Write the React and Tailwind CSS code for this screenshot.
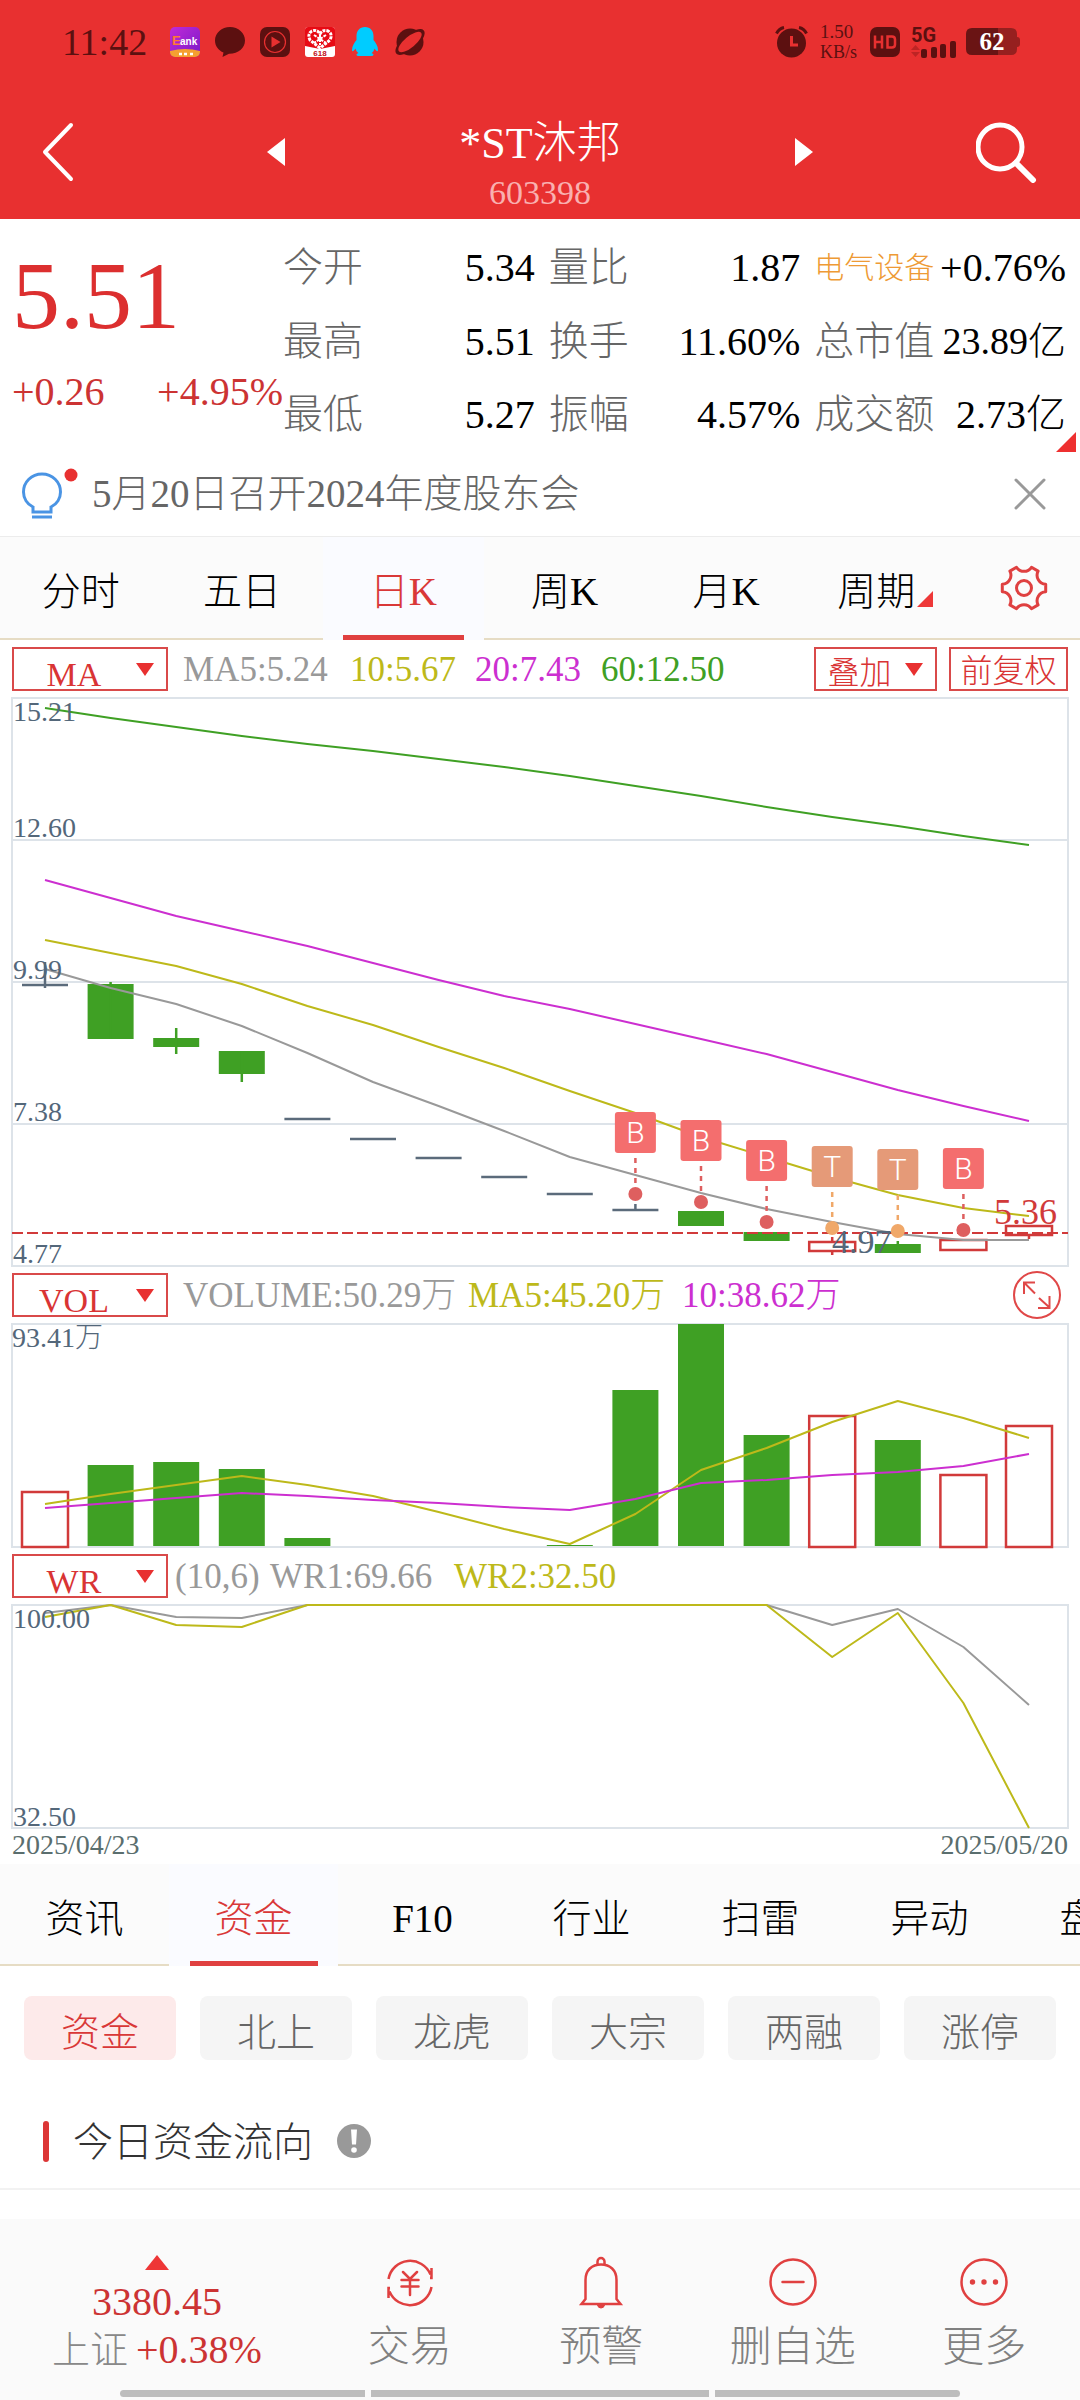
import React from "react";

const SERIF = "font-['Liberation_Serif','Noto_Sans_CJK_SC',serif]";

/* ---------- status bar ---------- */

function StatusBar() {
  return (
    <div className="flex h-[84px] items-center justify-between pl-[62px] pr-[60px] text-[#5c1010]">
      <div className="flex items-center gap-[15px]">
        <span className="mr-2 text-[38px] leading-none">11:42</span>
        <svg className="size-[30px]" viewBox="0 0 30 30" aria-hidden="true">
          <defs>
            <linearGradient id="bankTop" x1="0" y1="0" x2="1" y2="1">
              <stop offset="0" stopColor="#c02ad8" />
              <stop offset="1" stopColor="#7a18c8" />
            </linearGradient>
            <clipPath id="bankClip">
              <rect width="30" height="30" rx="5" />
            </clipPath>
          </defs>
          <g clipPath="url(#bankClip)">
            <rect width="30" height="30" fill="url(#bankTop)" />
            <path d="M0 24Q15 20 30 24V30H0Z" fill="#f5a030" />
            <text x="2" y="18" fontSize="13" fontWeight="700" fill="#ff7a30" fontFamily="Liberation Sans">E</text>
            <text x="10" y="18" fontSize="10" fontWeight="700" fill="#fff" fontFamily="Liberation Sans">ank</text>
            <path d="M9 27h3M14 27h3M20 27h3" stroke="#fff" strokeWidth="2.500" />
          </g>
        </svg>
        <svg className="size-[30px]" viewBox="0 0 30 30" fill="currentColor" aria-hidden="true">
          <path d="M15 0C6.700 0 0 6 0 13.500 0 19 3.500 23.500 8.500 25.500L7.500 30 14 26.800C23 27 30 21 30 13.500 30 6 23.300 0 15 0Z" />
        </svg>
        <svg className="size-[30px]" viewBox="0 0 30 30" aria-hidden="true">
          <rect width="30" height="30" rx="7" fill="currentColor" />
          <circle cx="15" cy="15" r="10.500" fill="none" stroke="#e83030" strokeWidth="1.200" />
          <path d="M11.500 9.500 20.500 15 11.500 20.500Z" fill="#e83030" />
        </svg>
        <svg className="size-[30px]" viewBox="0 0 30 30" aria-hidden="true">
          <rect width="30" height="30" rx="3" fill="#fff" />
          <path d="M3 0H27Q30 0 30 3V19L15 22 0 19V3Q0 0 3 0Z" fill="#e80a14" />
          <path d="M15 21 5 13Q2 7 7 4 12 2 15 7 18 2 23 4 28 7 25 13Z" fill="none" stroke="#fff" strokeWidth="3" strokeDasharray="3 1" />
          <path d="M9 8 21 16M21 8 9 16M15 8V18" stroke="#fff" strokeWidth="2" strokeDasharray="3 1" />
          <text x="15" y="29" fontSize="8" fontWeight="700" textAnchor="middle" fill="#c01018" fontFamily="Liberation Sans">618</text>
        </svg>
        <svg className="size-[30px]" viewBox="0 0 30 30" fill="#0cf" aria-hidden="true">
          <path d="M15 0C9.500 0 6.500 4 6.500 9V13C4.500 15.500 2 19 2 23 2 25 3.500 24.500 5.500 21.500 6 23.500 7 25 8.500 26 5.500 27 6 29 9 29H21C24 29 24.500 27 21.500 26 23 25 24 23.500 24.500 21.500 26.500 24.500 28 25 28 23 28 19 25.500 15.500 23.500 13V9C23.500 4 20.500 0 15 0Z" />
        </svg>
        <svg className="size-[30px] overflow-visible" viewBox="0 0 30 30" aria-hidden="true">
          <circle cx="15" cy="15" r="13.500" fill="currentColor" />
          <ellipse cx="15" cy="15" rx="18" ry="7.500" fill="currentColor" transform="rotate(-40 15 15)" />
          <ellipse cx="15" cy="15" rx="14.500" ry="5.500" fill="#e83030" transform="rotate(-40 15 15)" />
        </svg>
      </div>
      <div className="flex items-center">
        <svg className="h-8 w-[33px]" viewBox="0 0 33 32" aria-hidden="true">
          <circle cx="16.500" cy="17" r="14.500" fill="currentColor" />
          <path d="M1.500 7.500Q4 2.500 9 1.500M31.500 7.500Q29 2.500 24 1.500" fill="none" stroke="currentColor" strokeWidth="3" />
          <path d="M16.500 10V19H23" fill="none" stroke="#e83030" strokeWidth="3" />
        </svg>
        <div className="ml-3 w-[38px] text-[19px] leading-5">
          <div>1.50</div>
          <div className="text-[18px]">KB/s</div>
        </div>
        <svg className="ml-3 size-[30px]" viewBox="0 0 30 30" aria-hidden="true">
          <rect width="30" height="30" rx="7" fill="currentColor" />
          <path d="M5 8.500V21.500M12 8.500V21.500M5 15H12M17.500 9.500H22Q25 9.500 25 12.500V17.500Q25 20.500 22 20.500H17.500Z" fill="none" stroke="#e83030" strokeWidth="2.500" />
        </svg>
        <svg className="ml-[11px] h-[31px] w-[46px] overflow-visible" viewBox="0 0 46 31" aria-hidden="true">
          <text x="0" y="15" fontSize="20" fontWeight="700" fill="currentColor" fontFamily="Roboto">5G</text>
          <path d="M0 23 4.500 18 9 23ZM0 25 4.500 30 9 25Z" fill="#bd2424" />
          <g fill="currentColor">
            <rect x="10" y="22" width="6" height="9" rx="2" />
            <rect x="20" y="20" width="6" height="11" rx="2" />
            <rect x="29" y="17" width="6" height="14" rx="2" />
            <rect x="39" y="14" width="6" height="17" rx="2" />
          </g>
        </svg>
        <svg className="ml-[9px] h-7 w-[54px]" viewBox="0 0 54 28" aria-hidden="true">
          <path d="M32 0H45Q51 0 51 6V9Q54 9 54 12V16Q54 19 51 19V21Q51 27 45 27H32Z" fill="#96201f" />
          <path d="M32 0H6Q0 0 0 6V21Q0 27 6 27H32Z" fill="#6a1414" />
          <text x="26" y="22" fontSize="25" fontWeight="700" textAnchor="middle" fill="#fff" fontFamily="Liberation Serif">62</text>
        </svg>
      </div>
    </div>
  );
}

function TitleBar() {
  return (
    <div className="grid h-[135px] grid-cols-[1fr_minmax(0,546px)_1fr] items-center text-white">
      <button aria-label="返回" className="ml-[41px] justify-self-start">
        <svg className="h-[60px] w-[34px]" viewBox="0 0 34 60" fill="none" stroke="currentColor" strokeWidth="4" strokeLinecap="round" strokeLinejoin="round">
          <path d="M30 3 4 30 30 57" />
        </svg>
      </button>
      <div className="flex items-center justify-between">
        <button aria-label="上一只">
          <svg className="h-7 w-[18px]" viewBox="0 0 18 28" fill="currentColor">
            <path d="M18 0V28L0 14Z" />
          </svg>
        </button>
        <div className="pt-[30px] text-center">
          <h1 className="text-[44px] font-light leading-[52px]">*ST沐邦</h1>
          <p className="text-[34px] leading-[46px] text-[#f9b0b0]">603398</p>
        </div>
        <button aria-label="下一只">
          <svg className="h-7 w-[18px]" viewBox="0 0 18 28" fill="currentColor">
            <path d="M0 0V28L18 14Z" />
          </svg>
        </button>
      </div>
      <button aria-label="搜索" className="mr-[43px] justify-self-end">
        <svg className="h-[62px] w-[61px]" viewBox="0 0 61 62" fill="none" stroke="currentColor" strokeLinecap="round">
          <circle cx="24" cy="26" r="22" strokeWidth="5" />
          <path d="M40 42 57 59" strokeWidth="6" />
        </svg>
      </button>
    </div>
  );
}

/* ---------- quote ---------- */

const STATS = [
  ["今开", "5.34"],
  ["量比", "1.87"],
  ["电气设备", "+0.76%"],
  ["最高", "5.51"],
  ["换手", "11.60%"],
  ["总市值", "23.89亿"],
  ["最低", "5.27"],
  ["振幅", "4.57%"],
  ["成交额", "2.73亿"],
];

function Quote() {
  return (
    <section className="relative flex h-[233px] pl-3 pr-[14px]">
      <div className="w-[271px] shrink-0 whitespace-nowrap pt-[29px] text-[#dc2f2f]">
        <div className="text-[96px] leading-[96px]">5.51</div>
        <div className="mt-7 flex text-[40px] leading-10 text-[#cc3333]">
          <span className="w-[147px]">+0.26</span>
          <span>+4.95%</span>
        </div>
      </div>
      <dl className="grid flex-1 grid-cols-3 gap-x-[14px] pt-3">
        {STATS.map(([label, value]) => (
          <div key={label} className="flex h-[73px] items-center justify-between whitespace-nowrap text-[40px] leading-[73px]">
            <dt className={label === "电气设备" ? "text-[30px] text-[#ee9a35]" : "text-[#666]"}>{label}</dt>
            <dd className={value === "23.89亿" ? "text-[38px] text-black" : "text-black"}>{value}</dd>
          </div>
        ))}
      </dl>
      <svg className="absolute bottom-0 right-1 size-5" viewBox="0 0 20 20" aria-hidden="true">
        <path d="M20 0V20H0Z" fill="#ee3030" />
      </svg>
    </section>
  );
}

function Notice() {
  return (
    <section className="flex h-[84px] items-center pl-[22px] pr-[34px]">
      <svg className="h-[52px] w-[56px]" viewBox="0 0 56 52" fill="none" aria-hidden="true">
        <path d="M11 44V39C5 36 1.500 30 1.500 24 1.500 14 9.500 6 20 6S38.500 14 38.500 24C38.500 30 35 36 29 39V44Z" stroke="#4a94e4" strokeWidth="3" />
        <path d="M10 49H30" stroke="#4a94e4" strokeWidth="3" />
        <circle cx="49" cy="7" r="6.500" fill="#e83030" />
      </svg>
      <p className="ml-3.5 flex-1 text-[39px] leading-[52px] text-[#666]">5月20日召开2024年度股东会</p>
      <button aria-label="关闭">
        <svg className="size-8" viewBox="0 0 32 32" fill="none" stroke="#999" strokeWidth="3" strokeLinecap="round">
          <path d="M2 2 30 30M30 2 2 30" />
        </svg>
      </button>
    </section>
  );
}

/* ---------- tabs ---------- */

function Tab({ label, active, className = "", barClass = "", corner }) {
  return (
    <button
      role="tab"
      aria-selected={!!active}
      className={`flex flex-col items-center text-[39px] ${className} ${
        active ? "bg-[#fafbff] text-[#d93838]" : "border-b-2 border-[#e6dcc4] text-black"
      }`}
    >
      <span className={`flex flex-1 items-center whitespace-nowrap ${active ? "pt-[13px]" : "pt-2.5"} ${corner ? "pr-1" : ""}`}>
        {label}
        {corner && (
          <svg className="ml-0.5 mt-3 size-4" viewBox="0 0 16 16" aria-hidden="true">
            <path d="M16 0V16H0Z" fill="#ee3838" />
          </svg>
        )}
      </span>
      {active && <span className={`h-[5px] bg-[#e04040] ${barClass}`} />}
    </button>
  );
}

function gearPath() {
  const pt = (deg) => {
    const a = (deg * Math.PI) / 180;
    return `${(24 + 22 * Math.cos(a)).toFixed(1)} ${(24 + 22 * Math.sin(a)).toFixed(1)}`;
  };
  let d = `M${pt(-10)}`;
  for (let a = 0; a < 360; a += 60) d += `L${pt(a + 10)}A9 9 0 0 0 ${pt(a + 50)}`;
  return d + "Z";
}

function PeriodTabs() {
  const tabs = ["分时", "五日", "日K", "周K", "月K", "周期"];
  return (
    <div role="tablist" className="flex h-[104px] border-t border-[#ececec] bg-[#fbfbfb]">
      {tabs.map((t) => (
        <Tab key={t} label={t} active={t === "日K"} corner={t === "周期"} className="flex-1" barClass="w-3/4" />
      ))}
      <button aria-label="设置" className="flex w-28 shrink-0 items-center justify-center border-b-2 border-[#e6dcc4]">
        <svg className="size-12" viewBox="0 0 48 48" fill="none" stroke="#df4040" strokeWidth="3" strokeLinejoin="round">
          <path d={gearPath()} />
          <circle cx="24" cy="24" r="7.500" />
        </svg>
      </button>
    </div>
  );
}

function InfoTabs() {
  const tabs = ["资讯", "资金", "F10", "行业", "扫雷", "异动", "盘口"];
  return (
    <div role="tablist" className="flex h-[102px] overflow-hidden bg-[#fbfbfb]">
      {tabs.map((t) => (
        <Tab key={t} label={t} active={t === "资金"} className="w-[169px] shrink-0" barClass="w-32" />
      ))}
    </div>
  );
}

/* ---------- charts ---------- */

function Picker({ label, options, className }) {
  return (
    <div className={`relative h-11 border-2 border-[#d94a4a] text-[#d93434] ${className}`}>
      <select
        aria-label={label}
        defaultValue={options[0]}
        className="block h-full w-full cursor-pointer appearance-none bg-transparent pr-8 text-center"
      >
        {options.map((o) => (
          <option key={o}>{o}</option>
        ))}
      </select>
      <svg className="pointer-events-none absolute right-3 top-3.5 h-3.5 w-[18px]" viewBox="0 0 18 14" aria-hidden="true">
        <path d="M0 0H18L9 13Z" fill="#e83030" />
      </svg>
    </div>
  );
}

const INDICATOR = "w-[156px] font-['Liberation_Serif'] text-[34px]";

function Legend({ items, className }) {
  return (
    <div className={`flex flex-1 whitespace-nowrap pt-0.5 text-[35px] leading-10 ${className}`}>
      {items.map(([text, style]) => (
        <span key={text} className={style}>
          {text}
        </span>
      ))}
    </div>
  );
}

const GREY = "#999999";
const YELLOW = "#bdb91a";
const PURPLE = "#cc2fd0";
const GREEN = "#3fa024";
const SLATE = "#5b6b7b";
const RED = "#d13a3a";
const FRAME = "#dde3e9";

const cx = (i) => 33 + 65.6 * i;

function Line({ values, color }) {
  return (
    <polyline points={values.map((y, i) => `${cx(i)},${y}`).join(" ")} fill="none" stroke={color} strokeWidth="2" strokeLinejoin="round" />
  );
}

function AxisText({ y, children }) {
  return (
    <text x="1" y={y} fontSize="28" fill="#53677a">
      {children}
    </text>
  );
}

// [kind, top, bottom, wick top, wick bottom]
const CANDLES = [
  ["flat", 287, 287, 264, 290],
  ["down", 286, 341, 284, 341],
  ["down", 340, 349, 330, 356],
  ["down", 353, 376, 353, 384],
  ["flat", 421, 421, 421, 421],
  ["flat", 441, 441, 441, 441],
  ["flat", 460, 460, 460, 460],
  ["flat", 479, 479, 479, 479],
  ["flat", 496, 496, 496, 496],
  ["flat", 512, 512, 506, 512],
  ["down", 513, 528, 513, 528],
  ["down", 534, 543, 534, 543],
  ["up", 544, 553, 539, 557],
  ["down", 546, 555, 543, 555],
  ["up", 542, 552, 542, 552],
  ["up", 528, 537, 528, 541],
];

const MARKS = [
  [9, 414, "B"],
  [10, 422, "B"],
  [11, 442, "B"],
  [12, 448, "T"],
  [13, 451, "T"],
  [14, 450, "B"],
];

const MA = {
  ma60: [10, 20, 29, 38, 46, 53, 61, 69, 78, 88, 98, 109, 119, 128, 138, 147],
  ma20: [182, 200, 218, 233, 248, 265, 282, 298, 311, 326, 341, 356, 374, 392, 408, 423],
  ma10: [242, 255, 268, 286, 308, 327, 349, 370, 393, 415, 439, 459, 479, 497, 510, 518],
  ma5: [271, 290, 306, 328, 355, 384, 408, 433, 459, 477, 495, 511, 524, 536, 542, 542],
};

function PriceChart() {
  return (
    <svg className="block w-full overflow-visible" viewBox="0 0 1056 568" role="img" aria-label="日K线图">
      <rect width="1056" height="568" fill="none" stroke={FRAME} strokeWidth="2" />
      <path d="M0 142H1056M0 284H1056M0 426H1056" stroke={FRAME} strokeWidth="2" />
      {CANDLES.map(([kind, top, bottom, hi, lo], i) => {
        const x = cx(i);
        if (kind === "flat")
          return <path key={i} d={`M${x - 23} ${top}H${x + 23}M${x} ${hi}V${lo}`} stroke={SLATE} strokeWidth="2.500" />;
        if (kind === "down")
          return (
            <g key={i}>
              <rect x={x - 23} y={top} width="46" height={bottom - top} fill={GREEN} />
              <path d={`M${x} ${hi}V${lo}`} stroke={GREEN} strokeWidth="2.500" />
            </g>
          );
        return (
          <g key={i} stroke={RED} strokeWidth="2.500" fill="none">
            <rect x={x - 23} y={top} width="46" height={bottom - top} />
            <path d={`M${x} ${hi}V${top}M${x} ${bottom}V${lo}`} />
          </g>
        );
      })}
      <Line values={MA.ma60} color={GREEN} />
      <Line values={MA.ma20} color={PURPLE} />
      <Line values={MA.ma10} color={YELLOW} />
      <Line values={MA.ma5} color={GREY} />
      <path d="M0 535H1056" stroke={RED} strokeWidth="2" strokeDasharray="11 4" />
      <AxisText y="23">15.21</AxisText>
      <AxisText y="139">12.60</AxisText>
      <AxisText y="281">9.99</AxisText>
      <AxisText y="423">7.38</AxisText>
      <AxisText y="565">4.77</AxisText>
      <text x="820" y="555" fontSize="34" fill="#53677a">4.97</text>
      {MARKS.map(([i, top, letter]) => {
        const buy = letter === "B";
        const dot = buy ? "#de5f5f" : "#f0a869";
        return (
          <g key={i}>
            <rect x={cx(i) - 20.5} y={top} width="41" height="41" rx="3" fill={buy ? "#f46e6e" : "#e59a78"} />
            <text x={cx(i)} y={top + 31} fontSize="30" fontWeight="300" textAnchor="middle" fill="#fff" fontFamily="Roboto, sans-serif">
              {letter}
            </text>
            <path d={`M${cx(i)} ${top + 46}V${top + 75}`} stroke={dot} strokeWidth="2.500" strokeDasharray="5 5" />
            <circle cx={cx(i)} cy={top + 82} r="7" fill={dot} />
          </g>
        );
      })}
      <text x="1045" y="526" fontSize="36" textAnchor="end" fill={RED}>5.36</text>
    </svg>
  );
}

const VOLUMES = [
  ["up", 168], ["down", 141], ["down", 138], ["down", 145],
  ["down", 214], null, null, null,
  ["down", 221], ["down", 66], ["down", 0], ["down", 111],
  ["up", 92], ["down", 116], ["up", 151], ["up", 102],
];

function VolumeChart() {
  return (
    <svg className="block w-full overflow-visible" viewBox="0 0 1056 223" role="img" aria-label="成交量图">
      <rect width="1056" height="223" fill="none" stroke={FRAME} strokeWidth="2" />
      {VOLUMES.map(
        (v, i) =>
          v &&
          (v[0] === "down" ? (
            <rect key={i} x={cx(i) - 23} y={v[1]} width="46" height={222 - v[1]} fill={GREEN} />
          ) : (
            <rect key={i} x={cx(i) - 23} y={v[1]} width="46" height={223 - v[1]} fill="none" stroke={RED} strokeWidth="2.500" />
          ))
      )}
      <Line values={[180, 170, 161, 152, 161, 172, 188, 205, 220, 190, 146, 124, 98, 77, 94, 114]} color={YELLOW} />
      <Line values={[184, 179, 174, 169, 172, 176, 179, 183, 186, 175, 159, 156, 151, 148, 142, 130]} color={PURPLE} />
      <text x="0" y="23" fontSize="28" fontWeight="300" fill="#53677a">93.41万</text>
    </svg>
  );
}

function WrChart() {
  return (
    <svg className="block w-full overflow-visible" viewBox="0 0 1056 223" role="img" aria-label="威廉指标图">
      <rect width="1056" height="223" fill="none" stroke={FRAME} strokeWidth="2" />
      <Line values={[8, 0, 12, 13, 0, 0, 0, 0, 0, 0, 0, 0, 20, 4, 42, 100]} color={GREY} />
      <Line values={[12, 0, 20, 22, 0, 0, 0, 0, 0, 0, 0, 0, 52, 8, 98, 223]} color={YELLOW} />
      <AxisText y="23">100.00</AxisText>
      <AxisText y="221">32.50</AxisText>
    </svg>
  );
}

function Charts() {
  const indicators = ["MA", "VOL", "WR"];
  const pick = (first) => [first, ...indicators.filter((n) => n !== first)];
  return (
    <section className="px-3">
      <div className="flex h-[58px] items-center">
        <Picker label="主图指标" options={pick("MA")} className={INDICATOR} />
        <Legend
          className="ml-[15px]"
          items={[
            ["MA5:5.24", "w-[167px] text-[#999]"],
            ["10:5.67", "w-[125px] text-[#bdb91a]"],
            ["20:7.43", "w-[126px] text-[#cc2fd0]"],
            ["60:12.50", "text-[#3fa024]"],
          ]}
        />
        <Picker label="叠加" options={["叠加"]} className="w-[123px] text-[32px]" />
        <button className="ml-3 h-11 w-[119px] border-2 border-[#d94a4a] pt-0.5 text-[32px] leading-10 text-[#d93434]">前复权</button>
      </div>
      <PriceChart />
      <div className="flex h-[58px] items-center">
        <Picker label="成交量指标" options={pick("VOL")} className={INDICATOR} />
        <Legend
          className="ml-[15px]"
          items={[
            ["VOLUME:50.29万", "w-[285px] text-[#999]"],
            ["MA5:45.20万", "w-[214px] text-[#bdb91a]"],
            ["10:38.62万", "text-[#cc2fd0]"],
          ]}
        />
        <button aria-label="全屏" className="mr-[7px]">
          <svg className="block size-12" viewBox="0 0 48 48" fill="none" stroke="#e04848" strokeWidth="2">
            <circle cx="24" cy="24" r="23" />
            <path d="M22 22.500 11.500 12M22 11.500H11V23M26 27 36.500 36.500M25 37H36.500V25" />
          </svg>
        </button>
      </div>
      <VolumeChart />
      <div className="flex h-[58px] items-center">
        <Picker label="副图指标" options={pick("WR")} className={INDICATOR} />
        <Legend
          className="ml-[7px]"
          items={[
            ["(10,6)", "w-[95px] text-[#999]"],
            ["WR1:69.66", "w-[184px] text-[#999]"],
            ["WR2:32.50", "text-[#bdb91a]"],
          ]}
        />
      </div>
      <WrChart />
      <div className="flex h-9 justify-between text-[28px] leading-[34px] text-[#5a6e6e]">
        <time>2025/04/23</time>
        <time>2025/05/20</time>
      </div>
    </section>
  );
}

/* ---------- fund flow ---------- */

function FundFlow() {
  const chips = ["资金", "北上", "龙虎", "大宗", "两融", "涨停"];
  return (
    <section className="border-b-2 border-[#f2f2f2]">
      <div className="grid grid-cols-6 gap-6 px-6 pt-[30px]">
        {chips.map((c, i) => (
          <button
            key={c}
            className={`h-16 rounded-lg pt-2.5 text-[39px] leading-[54px] ${
              i === 0 ? "bg-[#fdeaea] text-[#d93838]" : "bg-[#f5f5f5] text-[#666]"
            }`}
          >
            {c}
          </button>
        ))}
      </div>
      <div className="mt-[34px] flex h-[94px] items-center pl-[43px]">
        <span className="h-[41px] w-1.5 rounded-full bg-[#dc3636]" />
        <h2 className="ml-6 pt-1 text-[40px] font-light leading-[52px] text-[#333]">今日资金流向</h2>
        <button aria-label="说明" className="ml-6">
          <svg className="block size-[34px]" viewBox="0 0 34 34">
            <circle cx="17" cy="17" r="17" fill="#999" />
            <path d="M14 5.500H20L19 20.500H15Z" fill="#fff" />
            <circle cx="17" cy="26" r="2.800" fill="#fff" />
          </svg>
        </button>
      </div>
    </section>
  );
}

/* ---------- bottom bar ---------- */

const ICONS = {
  交易: (
    <>
      <path d="M2.500 21A22 22 0 0 1 44.500 16.500M45.500 10V20H44M45.500 29A22 22 0 0 1 3.500 33.500M2.500 40V30H4" />
      <path d="M17 14 24 21 31 14M24 21V37M15.500 22H32.500M15.500 28.500H32.500" strokeLinecap="round" />
    </>
  ),
  预警: (
    <>
      <path d="M8.500 41V22C8.500 12 15 6.500 24 6.500S39.500 12 39.500 22V41L43.500 46H4.500L8.500 41Z" />
      <path d="M20.500 6.500V3.500A3.500 3.500 0 0 1 27.500 3.500V6.500" />
      <path d="M20.500 47H27.500Q27 50 24 50T20.500 47Z" fill="#e04040" strokeWidth="1" />
    </>
  ),
  删自选: (
    <>
      <circle cx="24" cy="24" r="22.500" />
      <path d="M13.500 24H34.500" strokeLinecap="round" />
    </>
  ),
  更多: (
    <>
      <circle cx="24" cy="24" r="22.500" />
      <g fill="#e04040" stroke="none">
        <circle cx="12.500" cy="24" r="2.700" />
        <circle cx="24" cy="24" r="2.700" />
        <circle cx="35.500" cy="24" r="2.700" />
      </g>
    </>
  ),
};

function BottomBar() {
  return (
    <footer className="flex h-[181px] flex-col items-center justify-between bg-[#fafafa] pb-[3px]">
      <nav className="grid w-full grid-cols-[314px_1fr_1fr_1fr_1fr]">
        <button className="flex flex-col items-center pt-9 text-[40px] leading-[48px] text-[#cc3333]">
          <svg className="h-[15px] w-6" viewBox="0 0 24 15" aria-hidden="true">
            <path d="M12 0 24 15H0Z" fill="#ee3636" />
          </svg>
          <span className="mt-2">3380.45</span>
          <span className="flex gap-2">
            <span className="text-[38px] text-[#888]">上证</span>
            <span>+0.38%</span>
          </span>
        </button>
        {Object.entries(ICONS).map(([label, art]) => (
          <button key={label} className="flex flex-col items-center pt-[39px] text-[42px] leading-[50px] text-[#808080]">
            <svg className="size-12 overflow-visible" viewBox="0 0 48 48" fill="none" stroke="#e04040" strokeWidth="2.500" aria-hidden="true">
              {art}
            </svg>
            <span className="mt-4">{label}</span>
          </button>
        ))}
      </nav>
      <div className="flex h-[7px] w-7/9 gap-1.5">
        <span className="flex-[29] rounded-l-full bg-[#bdbdbd]" />
        <span className="flex-[40] bg-[#bdbdbd]" />
        <span className="flex-[29] rounded-r-full bg-[#bdbdbd]" />
      </div>
    </footer>
  );
}

export default function App() {
  return (
    <div className={`flex min-h-screen flex-col overflow-hidden bg-white font-light ${SERIF}`}>
      <header className="bg-[#e83030]">
        <StatusBar />
        <TitleBar />
      </header>
      <main className="flex flex-1 flex-col">
        <Quote />
        <Notice />
        <PeriodTabs />
        <Charts />
        <InfoTabs />
        <FundFlow />
      </main>
      <BottomBar />
    </div>
  );
}
